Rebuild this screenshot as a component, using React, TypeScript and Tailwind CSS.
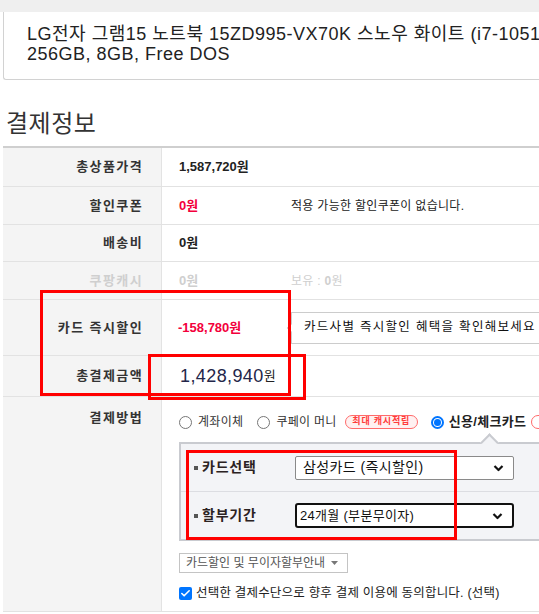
import { Check } from "lucide-react";

const label = "flex w-[159px] shrink-0 justify-end border-r border-[#e3e3e3] bg-[#f4f4f4] pr-[18px] text-[13px] font-bold tracking-[1.4px] text-[#333]";

function Row({ title, h, muted, top, children }: any) {
  return (
    <div className={`flex border-b border-[#e2e2e2] ${h}`}>
      <div className={`${label} ${top ? "items-start pt-[11px]" : "items-center"} ${muted ? "text-[#cfcfcf]" : ""}`}>{title}</div>
      <div className={`flex flex-1 pl-[17px] ${top ? "flex-col" : "items-center"}`}>{children}</div>
    </div>
  );
}

function Radio({ checked, className = "" }: { checked?: boolean; className?: string }) {
  if (checked) {
    return (
      <span className={`flex h-[13px] w-[13px] shrink-0 items-center justify-center rounded-full border-2 border-[#0075ff] bg-white ${className}`}>
        <span className="h-[7px] w-[7px] rounded-full bg-[#0075ff]" />
      </span>
    );
  }
  return <span className={`block h-[13px] w-[13px] shrink-0 rounded-full border border-[#767676] bg-white ${className}`} />;
}

function Chevron() {
  return (
    <svg width="11" height="7" viewBox="0 0 11 7" className="absolute right-[9px] top-1/2 -translate-y-1/2">
      <path d="M1.5 1.5l4 4 4-4" fill="none" stroke="#111" strokeWidth="2.2" />
    </svg>
  );
}

export default function App() {
  return (
    <div className="relative h-[614px] w-[539px] overflow-hidden bg-white font-['Liberation_Sans','Noto_Sans_CJK_KR',sans-serif] text-[#333]">
      <div className="w-[620px]">
        <div className="h-[12px] bg-[#efefef]" />
        <div className="ml-[3px] h-[68px] whitespace-nowrap rounded-bl-[3px] border-b border-l border-[#d2d2d2] pl-[23px] pt-[12px] text-[18px] leading-[20px] tracking-[0.5px] text-[#222]">
          <div>LG전자 그램15 노트북 15ZD995-VX70K 스노우 화이트 (i7-10510U</div>
          <div>256GB, 8GB, Free DOS</div>
        </div>

        <h2 className="ml-[6px] mt-[31px] text-[24px] leading-[26px] tracking-[0.5px] text-[#333]">결제정보</h2>

        <div className="ml-[3px] mt-[9px] border-t-2 border-[#cfcfcf]">
          <Row title="총상품가격" h="h-[39px]">
            <span className="text-[13px] font-bold text-[#222]">1,587,720원</span>
          </Row>
          <Row title="할인쿠폰" h="h-[38px]">
            <span className="w-[112px] text-[13px] font-bold text-[#f3003c]">0원</span>
            <span className="text-[12px] tracking-[0.3px] text-[#222]">적용 가능한 할인쿠폰이 없습니다.</span>
          </Row>
          <Row title="배송비" h="h-[37px]">
            <span className="text-[13px] font-bold text-[#222]">0원</span>
          </Row>
          <Row title="쿠팡캐시" h="h-[38px]" muted>
            <span className="w-[112px] text-[13px] font-bold text-[#cfcfcf]">0원</span>
            <span className="text-[12px] tracking-[0.3px] text-[#cfcfcf]">보유 : <b className="text-[#cfcfcf]">0</b>원</span>
          </Row>
          <Row title="카드 즉시할인" h="h-[56px]">
            <span className="w-[113px] -ml-[1px] text-[13px] font-bold text-[#f3003c]">-158,780원</span>
            <div className="relative flex h-[32px] w-[300px] items-center whitespace-nowrap border border-[#cccccc] bg-white pl-[12px] text-[12.5px] tracking-[1.3px] text-[#111]">
              <span className="absolute -left-[4px] top-1/2 h-[6px] w-[6px] -translate-y-1/2 rotate-45 border-b border-l border-[#cccccc] bg-white" />
              카드사별 즉시할인 혜택을 확인해보세요
            </div>
          </Row>
          <Row title="총결제금액" h="h-[41px]">
            <span className="ml-[1px] text-[18px] tracking-[0.4px] text-[#23264a]">1,428,940</span>
            <span className="text-[13px] text-[#222]">원</span>
          </Row>
          <Row title="결제방법" h="h-[215px]" top>
            <div className="mt-[15px] flex h-[20px] items-center whitespace-nowrap text-[12px] text-[#333]">
              <Radio />
              <span className="ml-[6px] tracking-[0.3px]">계좌이체</span>
              <Radio className="ml-[14px]" />
              <span className="ml-[6px] tracking-[0.3px]">쿠페이 머니</span>
              <span className="ml-[8px] flex h-[14px] w-[73px] items-center justify-center rounded-full border border-[#ff6b6b] bg-[#fff1f1] text-[9px] font-bold tracking-[0.8px] text-[#ff3b3b]">최대 캐시적립</span>
              <Radio checked className="ml-[13px]" />
              <span className="ml-[5px] text-[13px] font-bold tracking-[0.3px] text-[#222]">신용/체크카드</span>
              <span className="ml-[5px] h-[14px] w-[20px] shrink-0 rounded-full border border-[#ff6b6b]" />
            </div>

            <div className="relative mt-[10px] h-[99px] w-[400px] border-2 border-[#c9cbd0] bg-[#f3f4f7]">
              <span className="absolute -top-[8px] left-[302px] h-[13px] w-[13px] rotate-45 border-l-2 border-t-2 border-[#c9cbd0] bg-[#f3f4f7]" />
              <div className="flex h-[47px] items-center pl-[13px]">
                <div className="flex w-[101px] items-center">
                  <span className="h-[4px] w-[4px] bg-[#555]" />
                  <span className="ml-[4px] text-[14px] font-bold tracking-[0.8px] text-[#2b2222]">카드선택</span>
                </div>
                <div className="relative flex h-[24px] w-[219px] items-center rounded-[2px] border border-[#8a8a8a] bg-white pl-[7px] text-[14px] tracking-[0.4px] text-[#111]">
                  삼성카드 (즉시할인)
                  <Chevron />
                </div>
              </div>
              <div className="border-t border-[#dcdde2]" />
              <div className="flex h-[47px] items-center pl-[13px]">
                <div className="flex w-[101px] items-center">
                  <span className="h-[4px] w-[4px] bg-[#555]" />
                  <span className="ml-[4px] text-[14px] font-bold tracking-[0.8px] text-[#2b2222]">할부기간</span>
                </div>
                <div className="relative flex h-[25px] w-[219px] items-center rounded-[3px] border-2 border-[#111] bg-white pl-[3px] text-[13px] tracking-[0.3px] text-[#111]">
                  24개월 (부분무이자)
                  <Chevron />
                </div>
              </div>
            </div>

            <div className="mt-[12px] flex h-[20px] w-[169px] items-center border border-[#c4c4c4] bg-white pl-[6px] text-[12px] text-[#555]">
              카드할인 및 무이자할부안내
              <svg width="7" height="4" viewBox="0 0 7 4" className="ml-[6px]">
                <path d="M0 0h7L3.5 4z" fill="#777" />
              </svg>
            </div>

            <div className="mt-[11px] flex items-center whitespace-nowrap text-[12.5px] text-[#222]">
              <span className="flex h-[13px] w-[13px] items-center justify-center rounded-[2px] bg-[#0075ff]">
                <Check size={11} strokeWidth={3.5} color="white" />
              </span>
              <span className="ml-[4px] tracking-[0.2px]">선택한 결제수단으로 향후 결제 이용에 동의합니다. (선택)</span>
            </div>
          </Row>
        </div>
      </div>

      <div className="pointer-events-none absolute left-[40px] top-[290px] h-[106px] w-[251px] border-[3px] border-[#ff0000]" />
      <div className="pointer-events-none absolute left-[148px] top-[354px] h-[46px] w-[158px] border-[3px] border-[#ff0000]" />
      <div className="pointer-events-none absolute left-[186px] top-[450px] h-[90px] w-[271px] border-[3px] border-[#ff0000]" />
    </div>
  );
}
